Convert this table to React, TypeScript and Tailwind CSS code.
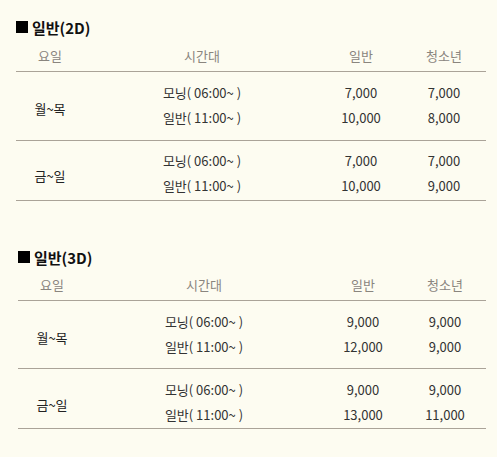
import React from "react";

type Group = {
  day: string;
  rows: { time: string; adult: string; youth: string }[];
  pad: string;
  dayPad: string;
};

type Section = {
  title: string;
  wrap: string;
  header: string;
  groups: Group[];
};

const sections: Section[] = [
  {
    title: "일반(2D)",
    wrap: "pt-[17px] pl-[16px]",
    header: "mt-[4px]",
    groups: [
      {
        day: "월~목",
        pad: "pt-[8px] pb-[10px]",
        dayPad: "pt-[8px]",
        rows: [
          { time: "모닝( 06:00~ )", adult: "7,000", youth: "7,000" },
          { time: "일반( 11:00~ )", adult: "10,000", youth: "8,000" },
        ],
      },
      {
        day: "금~일",
        pad: "pt-[7px] pb-[2px]",
        dayPad: "pt-[5px]",
        rows: [
          { time: "모닝( 06:00~ )", adult: "7,000", youth: "7,000" },
          { time: "일반( 11:00~ )", adult: "10,000", youth: "9,000" },
        ],
      },
    ],
  },
  {
    title: "일반(3D)",
    wrap: "pt-[46px] pl-[18px]",
    header: "mt-[3px]",
    groups: [
      {
        day: "월~목",
        pad: "pt-[8px] pb-[9px]",
        dayPad: "pt-[8px]",
        rows: [
          { time: "모닝( 06:00~ )", adult: "9,000", youth: "9,000" },
          { time: "일반( 11:00~ )", adult: "12,000", youth: "9,000" },
        ],
      },
      {
        day: "금~일",
        pad: "pt-[8px] pb-[1px]",
        dayPad: "pt-[5px]",
        rows: [
          { time: "모닝( 06:00~ )", adult: "9,000", youth: "9,000" },
          { time: "일반( 11:00~ )", adult: "13,000", youth: "11,000" },
        ],
      },
    ],
  },
];

function PriceSection({ s }: { s: Section }) {
  return (
    <div className={`${s.wrap} pr-[11px]`}>
      <div className="flex h-[20px] items-center gap-[4px]">
        <div className="h-[12px] w-[12px] bg-black" />
        <span className="text-[15px] font-bold leading-none text-[#111]">{s.title}</span>
      </div>
      <div
        className={`${s.header} flex h-[31px] items-center border-b border-[#aaa398] text-[13px] text-[#8a857e]`}
      >
        <div className="w-[68px] text-center">요일</div>
        <div className="w-[236px] text-center">시간대</div>
        <div className="w-[82px] text-center">일반</div>
        <div className="flex-1 text-center">청소년</div>
      </div>
      {s.groups.map((g, gi) => (
        <div key={gi} className={`flex border-b border-[#aaa398] ${g.pad}`}>
          <div className={`flex w-[68px] items-center justify-center text-[13px] text-[#222] ${g.dayPad}`}>
            {g.day}
          </div>
          <div className="flex flex-1 flex-col">
            {g.rows.map((r, ri) => (
              <div key={ri} className="flex h-[25px] items-center text-[13px] text-[#333]">
                <div className="w-[236px] text-center">{r.time}</div>
                <div className="w-[82px] text-center">{r.adult}</div>
                <div className="flex-1 text-center">{r.youth}</div>
              </div>
            ))}
          </div>
        </div>
      ))}
    </div>
  );
}

export default function App() {
  return (
    <div
      className="h-[457px] w-[497px] bg-[#fdfcf1]"
      style={{ fontFamily: '"Noto Sans CJK KR", "Noto Sans", sans-serif' }}
    >
      {sections.map((s, i) => (
        <PriceSection key={i} s={s} />
      ))}
    </div>
  );
}
